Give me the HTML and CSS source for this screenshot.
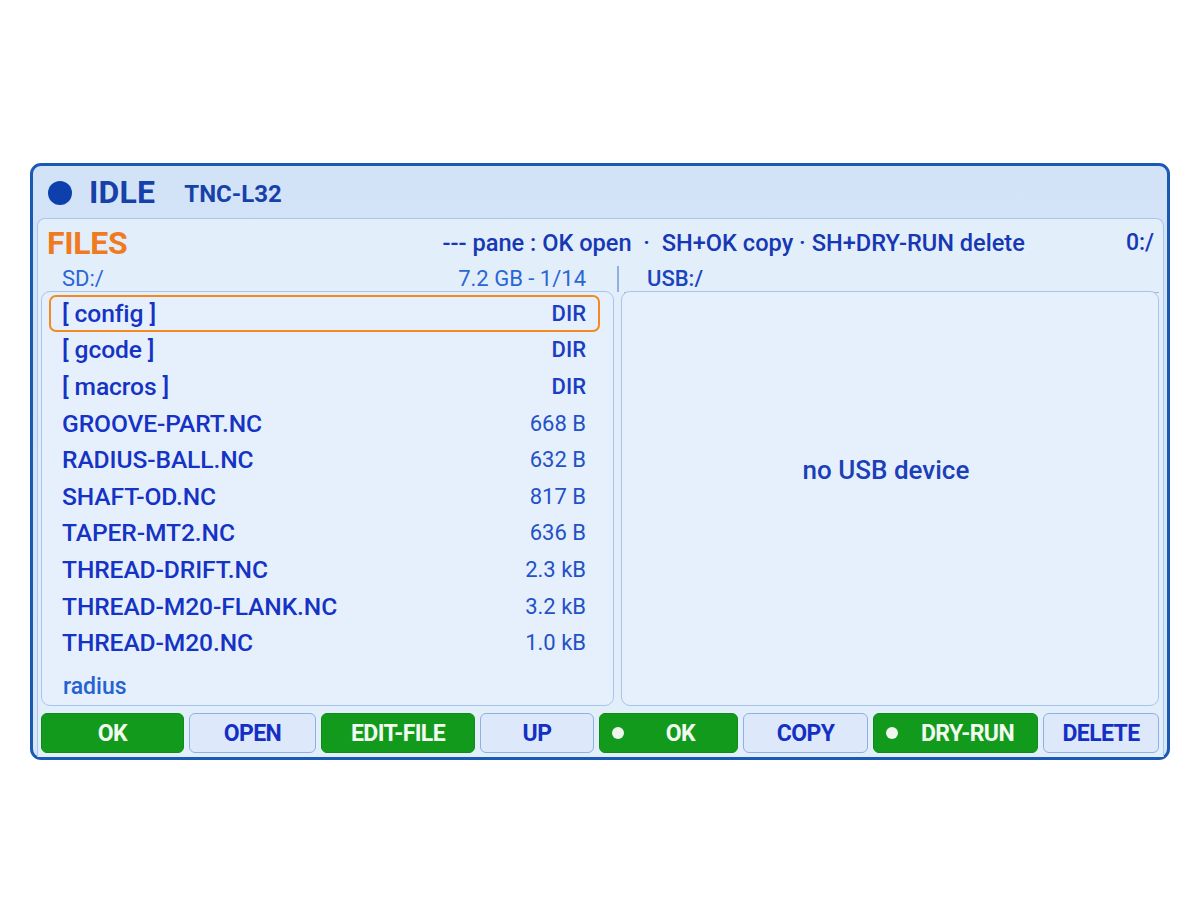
FILE: index.html
```html
<!DOCTYPE html>
<html>
<head>
<meta charset="utf-8">
<link rel="stylesheet" href="styles.css">
</head>
<body>
<div class="frame">
  <div class="header">
    <span class="state-dot"></span>
    <span class="state">IDLE</span>
    <span class="machine">TNC-L32</span>
  </div>
  <div class="panel">
    <div class="title-row">
      <span class="title">FILES</span>
      <span class="help">--- pane : OK open &nbsp;·&nbsp; SH+OK copy · SH+DRY-RUN delete</span>
      <span class="cwd">0:/</span>
    </div>
    <div class="path-row">
      <div class="path-left"><span>SD:/</span><span>7.2 GB - 1/14</span></div>
      <div class="path-div"><span></span></div>
      <div class="path-right">USB:/</div>
    </div>
    <div class="panes">
      <div class="box list">
        <div class="row sel"><span class="name">[ config ]</span><span class="size dir">DIR</span></div>
        <div class="row"><span class="name">[ gcode ]</span><span class="size dir">DIR</span></div>
        <div class="row"><span class="name">[ macros ]</span><span class="size dir">DIR</span></div>
        <div class="row"><span class="name">GROOVE-PART.NC</span><span class="size">668 B</span></div>
        <div class="row"><span class="name">RADIUS-BALL.NC</span><span class="size">632 B</span></div>
        <div class="row"><span class="name">SHAFT-OD.NC</span><span class="size">817 B</span></div>
        <div class="row"><span class="name">TAPER-MT2.NC</span><span class="size">636 B</span></div>
        <div class="row"><span class="name">THREAD-DRIFT.NC</span><span class="size">2.3 kB</span></div>
        <div class="row"><span class="name">THREAD-M20-FLANK.NC</span><span class="size">3.2 kB</span></div>
        <div class="row"><span class="name">THREAD-M20.NC</span><span class="size">1.0 kB</span></div>
        <div class="filter">radius</div>
      </div>
      <div class="box empty">no USB device</div>
    </div>
    <div class="buttons">
      <div class="btn green b1">OK</div>
      <div class="btn light b2">OPEN</div>
      <div class="btn green b3">EDIT-FILE</div>
      <div class="btn light b4">UP</div>
      <div class="btn green dotted b5"><span class="bdot"></span><span class="blabel">OK</span></div>
      <div class="btn light b6">COPY</div>
      <div class="btn green dotted b7"><span class="bdot"></span><span class="blabel">DRY-RUN</span></div>
      <div class="btn light b8">DELETE</div>
    </div>
  </div>
</div>
</body>
</html>
```

FILE: styles.css
```css
html, body {
  margin: 0;
  padding: 0;
  background: #ffffff;
}
body {
  font-family: Roboto, "Liberation Sans", sans-serif;
}
.frame {
  box-sizing: border-box;
  margin: 163px 0 0 30px;
  width: 1140px;
  height: 597px;
  border: 3px solid #1b5ab4;
  border-radius: 11px;
  background: linear-gradient(#d2e3f8, #d8e7f8);
  padding: 0 3px 0 4px;
  display: flex;
  flex-direction: column;
}
.header {
  height: 52px;
  flex: none;
  display: flex;
  align-items: center;
  padding-left: 11px;
  color: #1641a8;
}
.state-dot {
  width: 24px;
  height: 24px;
  border-radius: 50%;
  background: #0d40ad;
  margin-right: 17px;
  margin-top: 1px;
}
.state {
  font-size: 32px;
  font-weight: 700;
  letter-spacing: 0.2px;
  margin-right: 29px;
}
.machine {
  font-size: 24px;
  font-weight: 700;
  margin-top: 3px;
}
.panel {
  flex: 1;
  background: #e3eefb;
  border: 1px solid #aac6ec;
  border-bottom: none;
  border-radius: 8px 8px 0 0;
  padding: 0 4px 0 3px;
  display: flex;
  flex-direction: column;
}
.title-row {
  height: 43px;
  display: flex;
  align-items: center;
  padding: 2px 5px 0 6px;
}
.title {
  color: #f07a1e;
  font-size: 32px;
  font-weight: 700;
  letter-spacing: -0.3px;
}
.help {
  margin-left: auto;
  margin-right: 101px;
  color: #1638b4;
  font-size: 23.6px;
  font-weight: 500;
}
.cwd {
  color: #1638b4;
  font-size: 23px;
  font-weight: 500;
}
.path-row {
  height: 27px;
  display: grid;
  grid-template-columns: 573px 7px 1fr;
  color: #2a66d4;
  font-size: 22px;
  font-weight: 400;
}
.path-left {
  display: flex;
  justify-content: space-between;
  align-items: center;
  padding: 0 28px 0 21px;
}
.path-div {
  display: flex;
  justify-content: center;
  padding-top: 2px;
}
.path-div span {
  width: 2px;
  height: 26px;
  background: #8fb0e2;
}
.path-right {
  display: flex;
  align-items: center;
  padding-left: 23px;
  border-bottom: 1.5px solid #9dbbe8;
  margin-left: 3px;
  margin-bottom: -1px;
  color: #1a44c0;
  font-weight: 500;
}
.panes {
  height: 415px;
  display: grid;
  grid-template-columns: 573px 538px;
  gap: 7px;
}
.box {
  box-sizing: border-box;
  background: #e6f0fc;
  border: 1.5px solid #a8c4ec;
  border-radius: 9px;
}
.list {
  display: flex;
  flex-direction: column;
  padding: 3px 13px 0 7px;
}
.row {
  box-sizing: border-box;
  height: 36.6px;
  display: flex;
  align-items: center;
  justify-content: space-between;
  padding: 0 12px 0 11px;
  border: 2.5px solid transparent;
  border-radius: 7px;
}
.row.sel {
  border-color: #f3891f;
}
.name {
  color: #1533c4;
  font-size: 24.6px;
  font-weight: 500;
  letter-spacing: -0.1px;
}
.size {
  color: #2352c6;
  font-size: 22px;
  font-weight: 400;
}
.size.dir {
  color: #1a3ec2;
  font-weight: 500;
}
.filter {
  margin-top: auto;
  padding: 0 0 5px 14px;
  color: #2562d2;
  font-size: 23px;
  font-weight: 500;
}
.empty {
  display: flex;
  align-items: center;
  justify-content: center;
  padding-bottom: 58px;
  padding-right: 8px;
  color: #1a3fb8;
  font-size: 26px;
  font-weight: 500;
}
.buttons {
  margin-top: 7px;
  height: 40px;
  display: grid;
  grid-template-columns: 143fr 127fr 154fr 114fr 139fr 125fr 165fr 116fr;
  gap: 5px;
}
.btn {
  box-sizing: border-box;
  display: flex;
  align-items: center;
  justify-content: center;
  border-radius: 6px;
  font-size: 23px;
  font-weight: 700;
  letter-spacing: -0.6px;
}
.green {
  background: #129a1d;
  color: #f2fbef;
  border: 1px solid #0f8c18;
}
.light {
  background: #dde9fa;
  color: #1430c4;
  border: 1.5px solid #8fb0e3;
}
.dotted {
  justify-content: flex-start;
  padding-left: 12px;
}
.bdot {
  width: 12px;
  height: 12px;
  border-radius: 50%;
  background: #eef6ee;
  flex: none;
}
.blabel {
  flex: 1;
  text-align: center;
}
```
